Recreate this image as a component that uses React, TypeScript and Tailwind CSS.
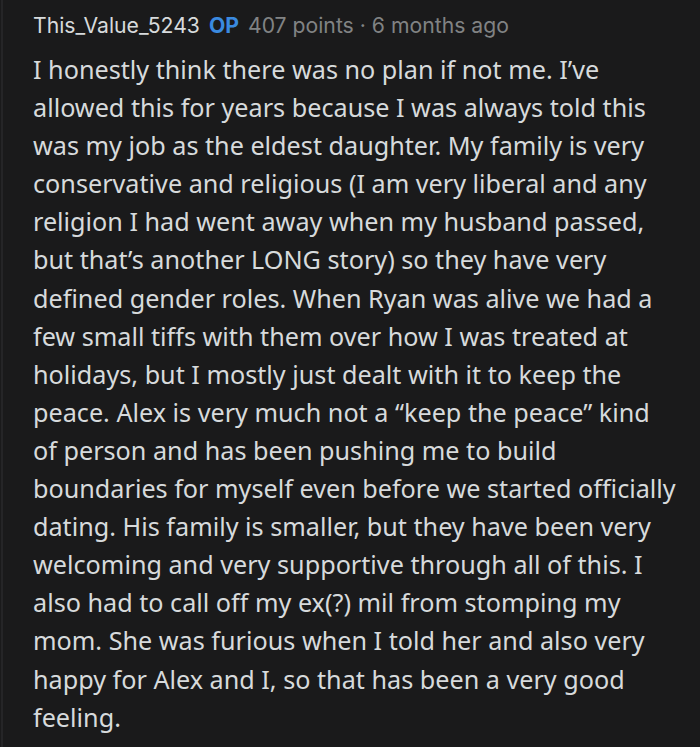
const lines = [
  "I honestly think there was no plan if not me. I’ve",
  "allowed this for years because I was always told this",
  "was my job as the eldest daughter. My family is very",
  "conservative and religious (I am very liberal and any",
  "religion I had went away when my husband passed,",
  "but that’s another LONG story) so they have very",
  "defined gender roles. When Ryan was alive we had a",
  "few small tiffs with them over how I was treated at",
  "holidays, but I mostly just dealt with it to keep the",
  "peace. Alex is very much not a “keep the peace” kind",
  "of person and has been pushing me to build",
  "boundaries for myself even before we started officially",
  "dating. His family is smaller, but they have been very",
  "welcoming and very supportive through all of this. I",
  "also had to call off my ex(?) mil from stomping my",
  "mom. She was furious when I told her and also very",
  "happy for Alex and I, so that has been a very good",
  "feeling.",
];

export default function App() {
  return (
    <div className="relative h-[747px] w-[700px] overflow-hidden bg-[#1a1a1b]">
      <div className="absolute left-[1px] top-0 h-full w-[2px] bg-[#252527]" />
      <div className="pl-[33px] pt-[8px]">
        <div className="flex items-baseline gap-[9px] whitespace-nowrap font-['Inter',sans-serif] text-[21.2px] leading-[34px]">
          <span className="text-[#d7dadc]">This_Value_5243</span>
          <span className="font-bold text-[#3a8ae0]">OP</span>
          <span className="text-[#818384]">407 points · 6 months ago</span>
        </div>
        <div className="mt-[8px] font-['Noto_Sans',sans-serif] text-[25.2px] leading-[38.1px] text-[#d7dadc]">
          {lines.map((l, i) => (
            <div key={i} className="whitespace-nowrap">
              {l}
            </div>
          ))}
        </div>
      </div>
    </div>
  );
}
